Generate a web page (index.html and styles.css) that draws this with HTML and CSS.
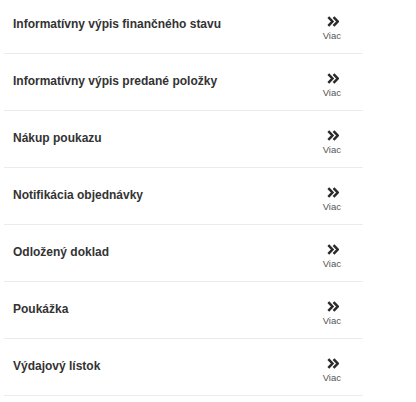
FILE: index.html
```html
<!DOCTYPE html>
<html lang="sk">
<head>
  <meta charset="UTF-8">
  <meta name="viewport" content="width=device-width, initial-scale=1.0">
  <title>Doklady</title>
  <link rel="stylesheet" href="styles.css">
</head>
<body>

  <div class="doc-list">
    <div class="doc-item">
      <span class="doc-title">Informatívny výpis finančného stavu</span>
      <a class="more" href="#">
        <svg class="more-icon" viewBox="0 0 11 10"><path d="M1.2 1 5 5 1.2 9M6 1 9.8 5 6 9"/></svg>
        <span class="more-label">Viac</span>
      </a>
    </div>
    <div class="doc-item">
      <span class="doc-title">Informatívny výpis predané položky</span>
      <a class="more" href="#">
        <svg class="more-icon" viewBox="0 0 11 10"><path d="M1.2 1 5 5 1.2 9M6 1 9.8 5 6 9"/></svg>
        <span class="more-label">Viac</span>
      </a>
    </div>
    <div class="doc-item">
      <span class="doc-title">Nákup poukazu</span>
      <a class="more" href="#">
        <svg class="more-icon" viewBox="0 0 11 10"><path d="M1.2 1 5 5 1.2 9M6 1 9.8 5 6 9"/></svg>
        <span class="more-label">Viac</span>
      </a>
    </div>
    <div class="doc-item">
      <span class="doc-title">Notifikácia objednávky</span>
      <a class="more" href="#">
        <svg class="more-icon" viewBox="0 0 11 10"><path d="M1.2 1 5 5 1.2 9M6 1 9.8 5 6 9"/></svg>
        <span class="more-label">Viac</span>
      </a>
    </div>
    <div class="doc-item">
      <span class="doc-title">Odložený doklad</span>
      <a class="more" href="#">
        <svg class="more-icon" viewBox="0 0 11 10"><path d="M1.2 1 5 5 1.2 9M6 1 9.8 5 6 9"/></svg>
        <span class="more-label">Viac</span>
      </a>
    </div>
    <div class="doc-item">
      <span class="doc-title">Poukážka</span>
      <a class="more" href="#">
        <svg class="more-icon" viewBox="0 0 11 10"><path d="M1.2 1 5 5 1.2 9M6 1 9.8 5 6 9"/></svg>
        <span class="more-label">Viac</span>
      </a>
    </div>
    <div class="doc-item">
      <span class="doc-title">Výdajový lístok</span>
      <a class="more" href="#">
        <svg class="more-icon" viewBox="0 0 11 10"><path d="M1.2 1 5 5 1.2 9M6 1 9.8 5 6 9"/></svg>
        <span class="more-label">Viac</span>
      </a>
    </div>
  </div>

</body>
</html>
```

FILE: styles.css
```css
body {
  font-family: "Liberation Sans", Arial, sans-serif;
  margin: 0;
  background: #fff;
}
.doc-list {
  width: 359px;
  margin: -3px 0 0 4px;
}
.doc-item {
  display: flex;
  align-items: center;
  justify-content: space-between;
  height: 56px;
  padding: 0 22px 0 9px;
  border-bottom: 1px solid #ececec;
}
.doc-title {
  font-size: 12px;
  font-weight: bold;
  color: #333;
  margin-top: -2px;
}
.more {
  display: flex;
  flex-direction: column;
  align-items: center;
  text-decoration: none;
  margin-top: 6px;
}
.more-icon {
  width: 12px;
  height: 11px;
  margin-left: 2px;
  fill: none;
  stroke: #2b2b2b;
  stroke-width: 2.3;
}
.more-label {
  font-size: 9.5px;
  color: #555;
  margin-top: 3px;
}
```
